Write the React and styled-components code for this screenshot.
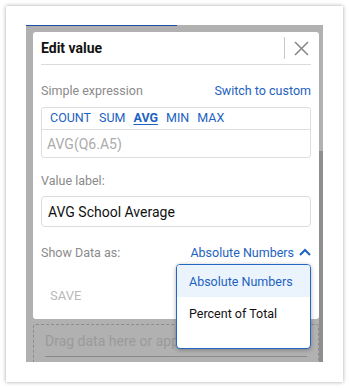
import React from "react";
import styled, { createGlobalStyle } from "styled-components";

const Global = createGlobalStyle`
  html, body { margin: 0; padding: 0; background: #fff; }
  body { font-family: Roboto, "Liberation Sans", sans-serif; }
  * { box-sizing: border-box; }
`;

const Page = styled.div`
  width: 349px;
  height: 388px;
  padding: 6px;
`;

const Card = styled.div`
  width: 337px;
  height: 376px;
  background: #fff;
  box-shadow: 0 0 4px rgba(0, 0, 0, 0.35);
  padding: 19px 20px 20px 20px;
`;

const Overlay = styled.div`
  position: relative;
  width: 297px;
  height: 337px;
  background: #b1b1b1;
  overflow: hidden;
  padding: 7px 4px 0 7px;
  &::before {
    content: "";
    position: absolute;
    left: 0;
    top: 0;
    width: 151px;
    height: 1px;
    background: #1d4f9e;
  }
`;

const ScrollThumb = styled.div`
  position: absolute;
  right: 0;
  top: 126px;
  width: 4px;
  bottom: 0;
  background: #8f8f8f;
`;

const Dialog = styled.div`
  position: relative;
  width: 286px;
  height: 287px;
  background: #fff;
  border-radius: 3px;
  padding: 0 8px;
  display: flex;
  flex-direction: column;
`;

const Header = styled.div`
  display: flex;
  align-items: center;
  justify-content: space-between;
  border-bottom: 1px solid #dcdcdc;
  height: 32px;
  box-sizing: content-box;
`;

const Title = styled.div`
  font-size: 14px;
  font-weight: 700;
  color: #111;
`;

const HeaderTools = styled.div`
  display: flex;
  align-items: center;
  height: 100%;
`;

const VSep = styled.div`
  width: 1px;
  height: 22px;
  background: #c8c8c8;
  margin-right: 9px;
`;

const CloseBtn = styled.button`
  border: 0;
  background: none;
  padding: 0;
  margin-right: 2px;
  width: 15px;
  height: 15px;
  display: flex;
  cursor: pointer;
`;

const Row = styled.div`
  display: flex;
  align-items: center;
  justify-content: space-between;
  position: relative;
  margin-top: ${(p) => p.$mt || 0}px;
  height: ${(p) => p.$h || 16}px;
`;

const Label = styled.span`
  font-size: 12.5px;
  color: #8a8a8a;
`;

const Link = styled.span`
  font-size: 12.5px;
  color: #1d62c0;
  display: flex;
  align-items: center;
  gap: 5px;
`;

const ExprBox = styled.div`
  margin-top: 9px;
  border: 1px solid #dedede;
  border-radius: 3px;
  height: 51px;
  display: flex;
  flex-direction: column;
`;

const FnRow = styled.div`
  height: 22px;
  border-bottom: 1px solid #dedede;
  display: flex;
  align-items: center;
  gap: 8px;
  padding: 0 0 2px 8px;
`;

const Fn = styled.span`
  font-size: 12.5px;
  color: #1d62c0;
  font-weight: ${(p) => (p.$active ? 700 : 400)};
  text-decoration: ${(p) => (p.$active ? "underline" : "none")};
  text-underline-offset: 2px;
`;

const ExprText = styled.div`
  flex: 1;
  display: flex;
  align-items: center;
  padding-left: 5px;
  font-size: 14px;
  color: #ababab;
`;

const Input = styled.div`
  margin-top: 8px;
  height: 31px;
  border: 1px solid #dcdcdc;
  border-radius: 4px;
  display: flex;
  align-items: center;
  padding-left: 6px;
  font-size: 14px;
  color: #111;
`;

const Save = styled.div`
  margin-top: 28px;
  padding-left: 9px;
  font-size: 13px;
  color: #b8b8b8;
`;

const Menu = styled.div`
  position: absolute;
  right: 0;
  top: 20px;
  width: 135px;
  height: 85px;
  background: #fff;
  border: 1px solid #2366c4;
  border-radius: 4px;
  box-shadow: 0 1px 4px rgba(0, 0, 0, 0.3);
  overflow: hidden;
  z-index: 2;
`;

const MenuItem = styled.div`
  height: 32px;
  display: flex;
  align-items: center;
  padding-left: 12px;
  font-size: 12.5px;
  color: ${(p) => (p.$active ? "#1d62c0" : "#111")};
  background: ${(p) => (p.$active ? "#ebf4fd" : "#fff")};
`;

const DropZone = styled.div`
  margin-top: 5px;
  width: 286px;
  height: 60px;
  border: 1px dashed #8c8c8c;
  border-radius: 3px;
  padding: 0 11px;
`;

const DropText = styled.div`
  height: 32px;
  display: flex;
  align-items: center;
  font-size: 14px;
  color: #9a9a9a;
  border-bottom: 1px solid #8a8a8a;
  white-space: nowrap;
`;

const XIcon = () => (
  <svg width="15" height="15" viewBox="0 0 15 15">
    <path d="M1 1 L14 14 M14 1 L1 14" stroke="#8a8a8a" strokeWidth="1.6" fill="none" />
  </svg>
);

const Chevron = () => (
  <svg width="12" height="8" viewBox="0 0 12 8">
    <path d="M1 7 L6 2 L11 7" stroke="#1d62c0" strokeWidth="2" fill="none" />
  </svg>
);

export default function App() {
  return (
    <>
      <Global />
      <Page>
        <Card>
          <Overlay>
            <Dialog>
              <Header>
                <Title>Edit value</Title>
                <HeaderTools>
                  <VSep />
                  <CloseBtn aria-label="close">
                    <XIcon />
                  </CloseBtn>
                </HeaderTools>
              </Header>
              <Row $mt={17} $h={16}>
                <Label>Simple expression</Label>
                <Link>Switch to custom</Link>
              </Row>
              <ExprBox>
                <FnRow>
                  <Fn>COUNT</Fn>
                  <Fn>SUM</Fn>
                  <Fn $active>AVG</Fn>
                  <Fn>MIN</Fn>
                  <Fn>MAX</Fn>
                </FnRow>
                <ExprText>AVG(Q6.A5)</ExprText>
              </ExprBox>
              <Row $mt={14} $h={16}>
                <Label>Value label:</Label>
              </Row>
              <Input>AVG School Average</Input>
              <Row $mt={17} $h={16}>
                <Label>Show Data as:</Label>
                <Link>
                  Absolute Numbers
                  <Chevron />
                </Link>
                <Menu>
                  <MenuItem $active>Absolute Numbers</MenuItem>
                  <MenuItem>Percent of Total</MenuItem>
                </Menu>
              </Row>
              <Save>SAVE</Save>
            </Dialog>
            <DropZone>
              <DropText>Drag data here or apply a value</DropText>
            </DropZone>
            <ScrollThumb />
          </Overlay>
        </Card>
      </Page>
    </>
  );
}
